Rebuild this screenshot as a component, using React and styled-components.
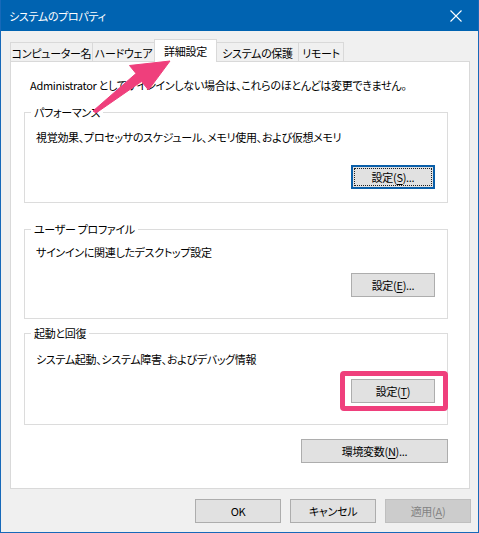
import styled, { createGlobalStyle } from "styled-components";

const GlobalStyle = createGlobalStyle`
  html, body {
    margin: 0;
    padding: 0;
    background: #ffffff;
  }
  body {
    font-family: "Noto Sans CJK JP", "Noto Sans", sans-serif;
    font-size: 11px;
    letter-spacing: -0.3px;
    font-feature-settings: "palt";
    color: #000;
  }
`;

const Window = styled.div`
  position: relative;
  width: 479px;
  height: 533px;
  box-sizing: border-box;
  display: flex;
  flex-direction: column;
  background: #f0f0f0;
  border: 1px solid #1769b9;
  border-top: none;
  overflow: hidden;
`;

const TitleBar = styled.div`
  height: 31px;
  margin: 0 -1px;
  padding: 0 0 0 9px;
  display: flex;
  align-items: center;
  justify-content: space-between;
  background: #0063b1;
  color: #fff;
`;

const CloseButton = styled.div`
  width: 46px;
  height: 31px;
  display: flex;
  align-items: center;
  justify-content: center;
`;

const Body = styled.div`
  flex: 1;
  display: flex;
  flex-direction: column;
  padding: 8px 8px 0 9px;
`;

const TabStrip = styled.div`
  display: flex;
  align-items: flex-end;
  height: 23px;
  margin-bottom: -1px;
  position: relative;
  z-index: 1;
`;

const Tab = styled.div`
  width: ${(p) => p.$w}px;
  height: ${(p) => (p.$active ? 23 : 20)}px;
  box-sizing: border-box;
  display: flex;
  align-items: center;
  justify-content: center;
  background: ${(p) => (p.$active ? "#fff" : "#f0f0f0")};
  border: 1px solid #d9d9d9;
  border-bottom: ${(p) => (p.$active ? "none" : "1px solid #d9d9d9")};
  margin-right: -1px;
  padding-top: ${(p) => (p.$active ? 0 : 1)}px;
  white-space: nowrap;
`;

const Panel = styled.div`
  width: 460px;
  height: 428px;
  box-sizing: border-box;
  background: #fff;
  border: 1px solid #d9d9d9;
  padding: 15px 0 0 13px;
  display: flex;
  flex-direction: column;
`;

const Intro = styled.div`
  line-height: 16px;
  margin-left: 6px;
  white-space: nowrap;
`;

const Group = styled.div`
  position: relative;
  width: 424px;
  height: ${(p) => p.$h}px;
  margin-top: ${(p) => p.$mt}px;
  box-sizing: border-box;
  border: 1px solid #dcdcdc;
  padding: ${(p) => p.$pt}px 12px 0 11px;
  display: flex;
  flex-direction: column;
`;

const Legend = styled.span`
  position: absolute;
  top: -9px;
  left: 6px;
  padding: 0 3px;
  background: #fff;
  line-height: 16px;
  white-space: nowrap;
`;

const Description = styled.div`
  line-height: 16px;
  white-space: nowrap;
`;

const ButtonRow = styled.div`
  display: flex;
  justify-content: flex-end;
  width: ${(p) => (p.$w ? `${p.$w}px` : "auto")};
  margin-top: ${(p) => p.$mt || 0}px;
`;

const Button = styled.div`
  width: ${(p) => p.$w || 84}px;
  height: 24px;
  box-sizing: border-box;
  display: flex;
  align-items: center;
  justify-content: center;
  background: ${(p) => (p.$disabled ? "#cccccc" : "#e1e1e1")};
  color: ${(p) => (p.$disabled ? "#838383" : "#000")};
  border: 1px solid ${(p) => (p.$disabled ? "#bfbfbf" : p.$focused ? "#0a5fa9" : "#adadad")};
  box-shadow: ${(p) => (p.$focused ? "inset 0 0 0 1px #0a5fa9" : "none")};
  outline: ${(p) => (p.$focused ? "1px dotted #222" : "none")};
  outline-offset: -4px;
  white-space: nowrap;

  u {
    text-underline-offset: 2px;
  }
`;

const Highlight = styled.div`
  position: relative;

  &::after {
    content: "";
    position: absolute;
    inset: -8px -13px -8px -11px;
    border: 5px solid #ef3f7c;
    border-radius: 4px;
  }
`;

const Footer = styled.div`
  display: flex;
  justify-content: flex-end;
  gap: 9px;
  padding-top: 10px;
  margin-right: -1px;
`;

const ArrowLayer = styled.svg`
  position: absolute;
  left: 0;
  top: 0;
  pointer-events: none;
  z-index: 5;
`;

const tabs = [
  { label: "コンピューター名", w: 83 },
  { label: "ハードウェア", w: 63 },
  { label: "詳細設定", w: 63, active: true },
  { label: "システムの保護", w: 83 },
  { label: "リモート", w: 46 },
];

export default function App() {
  return (
    <>
      <GlobalStyle />
      <Window>
        <TitleBar>
          <span>システムのプロパティ</span>
          <CloseButton>
            <svg width="12" height="12" viewBox="0 0 12 12">
              <path d="M0.5 0.5 L11.5 11.5 M11.5 0.5 L0.5 11.5" stroke="#fff" strokeWidth="1.1" />
            </svg>
          </CloseButton>
        </TitleBar>
        <Body>
          <TabStrip>
            {tabs.map((t) => (
              <Tab key={t.label} $w={t.w} $active={t.active}>
                {t.label}
              </Tab>
            ))}
          </TabStrip>
          <Panel>
            <Intro>
              Administrator としてサインインしない場合は、これらのほとんどは変更できません。
            </Intro>
            <Group $h={91} $mt={19} $pt={16}>
              <Legend>パフォーマンス</Legend>
              <Description>
                視覚効果、プロセッサのスケジュール、メモリ使用、および仮想メモリ
              </Description>
              <ButtonRow $mt={20}>
                <Button $focused>
                  設定(<u>S</u>)...
                </Button>
              </ButtonRow>
            </Group>
            <Group $h={90} $mt={26} $pt={14}>
              <Legend>ユーザー プロファイル</Legend>
              <Description>サインインに関連したデスクトップ設定</Description>
              <ButtonRow $mt={13}>
                <Button>
                  設定(<u>E</u>)...
                </Button>
              </ButtonRow>
            </Group>
            <Group $h={92} $mt={14} $pt={17}>
              <Legend>起動と回復</Legend>
              <Description>システム起動、システム障害、およびデバッグ情報</Description>
              <ButtonRow $mt={12}>
                <Highlight>
                  <Button>
                    設定(<u>T</u>)
                  </Button>
                </Highlight>
              </ButtonRow>
            </Group>
            <ButtonRow $mt={14} $w={424}>
              <Button $w={147}>
                環境変数(<u>N</u>)...
              </Button>
            </ButtonRow>
          </Panel>
          <Footer>
            <Button $w={86}>OK</Button>
            <Button $w={86}>キャンセル</Button>
            <Button $w={86} $disabled>
              適用(<u>A</u>)
            </Button>
          </Footer>
        </Body>
        <ArrowLayer width="479" height="533" viewBox="0 0 479 533">
          <polygon
            points="92,111 135,73.5 128.5,65.5 169,61 147.5,90 140.5,81.5 95,113"
            fill="#ef3f7c"
            stroke="#ef3f7c"
            strokeWidth="1"
            strokeLinejoin="round"
          />
        </ArrowLayer>
      </Window>
    </>
  );
}
